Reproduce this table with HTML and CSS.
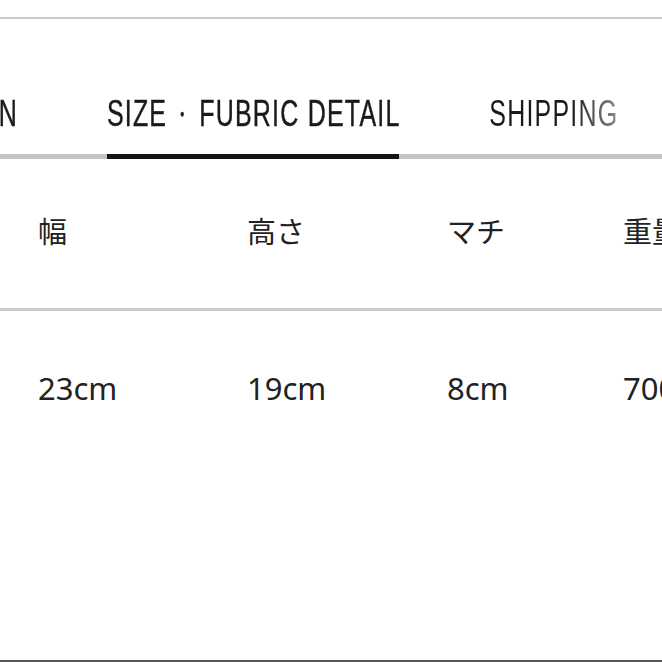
FILE: index.html
```html
<!DOCTYPE html>
<html lang="ja">
<head>
<meta charset="utf-8">
<title>Size</title>
<link rel="stylesheet" href="styles.css">
</head>
<body>
<div class="page">
  <div class="top-rule"></div>
  <nav class="tabs">
    <div class="tab"><span class="tab-label">DESCRIPTION</span></div>
    <div class="tab active"><span class="tab-label">SIZE<span class="dot">・</span>FUBRIC DETAIL</span></div>
    <div class="tab"><span class="tab-label fade">SHIPPING</span></div>
  </nav>
  <div class="spec">
    <div class="row head">
      <div class="cell">幅</div>
      <div class="cell">高さ</div>
      <div class="cell">マチ</div>
      <div class="cell">重量</div>
    </div>
    <div class="row values">
      <div class="cell">23cm</div>
      <div class="cell">19cm</div>
      <div class="cell">8cm</div>
      <div class="cell">700g</div>
    </div>
  </div>
  <div class="bottom-rule"></div>
</div>
</body>
</html>
```

FILE: styles.css
```css
html, body {
  margin: 0;
  padding: 0;
  background: #fff;
}
body {
  width: 662px;
  height: 662px;
  overflow: hidden;
}
.page {
  display: flex;
  flex-direction: column;
  height: 662px;
}
.top-rule {
  margin-top: 17px;
  height: 2px;
  background: #cacaca;
  flex: none;
}
.tabs {
  display: flex;
  gap: 90px;
  margin-left: -166px;
  padding-top: 88px;
  border-bottom: 5px solid #c4c4c4;
  white-space: nowrap;
  flex: none;
}
.tab {
  flex: none;
  padding-bottom: 22px;
}
.tab.active {
  border-bottom: 5px solid #141414;
  margin-bottom: -5px;
}
.tab-label {
  display: block;
  font-family: "Liberation Sans", "Noto Sans CJK JP", sans-serif;
  font-size: 25px;
  line-height: 25px;
  height: 25px;
  letter-spacing: 1.2px;
  margin-right: -1.2px;
  color: #1a1a1a;
  -webkit-text-stroke: 0.3px #1a1a1a;
  transform: scaleY(1.48);
  transform-origin: 50% 100%;
}
.dot {
  display: inline-block;
  font-size: 14px;
  vertical-align: 3px;
  padding: 0 10px 0 8px;
  letter-spacing: 0;
}
.fade {
  background: linear-gradient(90deg, #1a1a1a 62%, #8a8a8a 100%);
  -webkit-background-clip: text;
  background-clip: text;
  color: transparent;
  -webkit-text-stroke: 0;
}
.spec {
  flex: none;
}
.row {
  display: grid;
  grid-template-columns: 209px 200px 176px 1fr;
  padding-left: 38px;
  align-items: center;
  white-space: nowrap;
}
.row.head {
  height: 152px;
  box-sizing: border-box;
  padding-bottom: 6px;
  border-bottom: 3px solid #cbcbcb;
  font-family: "Noto Sans CJK JP", sans-serif;
  font-size: 29px;
  color: #222;
}
.row.values {
  height: 154px;
  font-family: "Noto Sans", "Noto Sans CJK JP", sans-serif;
  font-size: 31px;
  color: #222;
}
.cell {
  line-height: 1;
}
.bottom-rule {
  margin-top: auto;
  height: 2px;
  background: #555;
  flex: none;
}
```
